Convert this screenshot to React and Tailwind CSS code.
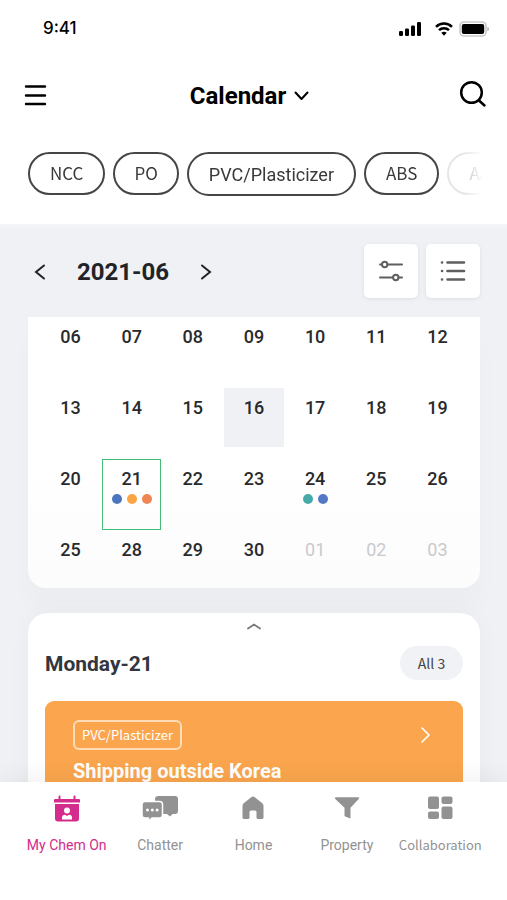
import React, { useState } from "react";

const categories = [
  { name: "NCC", style: "h-[43px] px-5 pb-0.5 font-['Noto_Sans_CJK_KR',sans-serif] text-[17px]" },
  { name: "PO", style: "h-[43px] px-[19px] pb-0.5 font-['Noto_Sans_CJK_KR',sans-serif] text-[17px]" },
  { name: "PVC/Plasticizer", style: "h-[44px] px-5 text-[18px]" },
  { name: "ABS", style: "h-[43px] px-5 pb-0.5 font-['Noto_Sans_CJK_KR',sans-serif] text-[17px]" },
];

const weeks = [
  ["06", "07", "08", "09", "10", "11", "12"],
  ["13", "14", "15", "16", "17", "18", "19"],
  ["20", "21", "22", "23", "24", "25", "26"],
  ["25", "28", "29", "30", "01", "02", "03"],
];

const events = {
  "2-1": ["bg-[#4a76bd]", "bg-[#fba443]", "bg-[#f08455]"],
  "2-4": ["bg-[#46aaa9]", "bg-[#5379c4]"],
};

const StatusBar = () => (
  <div className="flex items-center justify-between pl-[43px] pr-[18px] pt-[18px]">
    <span className="font-['Inter',sans-serif] text-[17px] leading-5 font-medium">9:41</span>
    <div className="flex items-center pt-0.5">
      <svg width="22" height="14" viewBox="0 0 22 14" aria-hidden="true">
        <rect x="0" y="9" width="4" height="5" rx="1.3" />
        <rect x="6" y="6.5" width="4" height="7.5" rx="1.3" />
        <rect x="12" y="3.5" width="4" height="10.5" rx="1.3" />
        <rect x="18" y="0" width="4" height="14" rx="1.3" />
      </svg>
      <svg className="ml-3.5" width="18" height="14" viewBox="0 0 18 14" fill="none" stroke="#000" strokeWidth="2.5" aria-hidden="true">
        <path d="M1 4.8C5.4.5 12.600.5 17 4.800" />
        <path d="M4 8.200C6.800 5.500 11.200 5.500 14 8.200" />
        <path d="M6.300 10.800C7.900 9.500 10.100 9.500 11.700 10.800L9 13.700Z" fill="#000" stroke="none" />
      </svg>
      <svg className="ml-1.5" width="30" height="16" viewBox="0 0 30 16" aria-hidden="true">
        <rect x="1" y="1" width="26" height="14" rx="4" fill="#fff" stroke="#c9c9c9" strokeWidth="1.6" />
        <rect x="2.800" y="3" width="22.400" height="10" rx="2" fill="#000" />
        <path d="M28.500 6v4c1-.4 1.300-1.200 1.300-2s-.3-1.600-1.300-2z" fill="#999" />
      </svg>
    </div>
  </div>
);

const DayCell = ({ day, row, col, active, onSelect }) => {
  const isOther = row === 3 && col > 3;
  const isToday = row === 1 && col === 3;
  const dots = events[`${row}-${col}`];

  return (
    <td className="px-px py-0 align-top">
      <button
        onClick={onSelect}
        className={`flex w-full flex-col items-center pt-2 text-[18px] leading-6 ${
          row === 3 ? "h-[58px]" : isToday ? "h-[59px]" : "h-[71px]"
        } ${isToday ? "bg-[#f0f1f5]" : ""} ${active ? "shadow-[inset_0_0_0_1px_#45bd78]" : ""} ${
          isOther ? "font-normal text-[#c9cacc]" : "font-medium text-[#292a2c]"
        }`}
      >
        {day}
        {dots && (
          <span className="mt-[3px] flex gap-[5px]">
            {dots.map((color, i) => (
              <span key={i} className={`h-2.5 w-2.5 rounded-full ${color}`}></span>
            ))}
          </span>
        )}
      </button>
    </td>
  );
};

const tabs = [
  {
    name: "My Chem On",
    icon: (
      <svg width="28" height="28" viewBox="0 0 28 28" fill="currentColor">
        <path d="M5.500 1.500q0-1 1-1t1 1V4h13V1.500q0-1 1-1t1 1V4H26q1 0 1 1v2.500H1V5q0-1 1-1h3.500z" />
        <path d="M2 9h24v14.500q0 3-3 3H5q-3 0-3-3z" />
        <circle cx="14" cy="15.500" r="3" fill="#fff" />
        <path d="M9 24.500v-1.700q0-3 3-3l2 1.200 2-1.200q3 0 3 3v1.700z" fill="#fff" />
      </svg>
    ),
  },
  {
    name: "Chatter",
    icon: (
      <svg width="36" height="28" viewBox="0 0 36 28" fill="currentColor">
        <path d="M16.500 1H33q3 0 3 3v12q0 3-3 3h-2.500L28 21.500l-3-2.500h-7L13 6V4q0-3 3.500-3z" />
        <path d="M3 6.500h14.500q3 0 3 3v10.500q0 3-3 3H10L6.500 26.500v-3.500H3q-3 0-3-3V9.500q0-3 3-3z" stroke="#fff" strokeWidth="1.5" />
        <circle cx="5.500" cy="15" r="1.500" fill="#fff" />
        <circle cx="10.300" cy="15" r="1.500" fill="#fff" />
        <circle cx="15.100" cy="15" r="1.500" fill="#fff" />
      </svg>
    ),
  },
  {
    name: "Home",
    icon: (
      <svg width="28" height="28" viewBox="0 0 28 28" fill="currentColor">
        <path d="M12.500 2q1.500-1 3 0l7.500 6q1.500 1.200 1.500 3v11.500q0 1.500-1.500 1.500h-4q-1.500 0-1.500-1.500V17q0-1.500-1.500-1.500h-4q-1.500 0-1.500 1.500v5.500Q10.500 24 9 24H5q-1.500 0-1.500-1.500V11q0-1.800 1.500-3z" />
      </svg>
    ),
  },
  {
    name: "Property",
    icon: (
      <svg width="28" height="28" viewBox="0 0 28 28" fill="currentColor">
        <path d="M3 2.200h22q2 0 .7 1.700L17.500 12.700v10q0 .8-.8.500l-4.500-1.800q-.7-.3-.7-1v-7.700L2.300 3.900Q1 2.200 3 2.200z" />
      </svg>
    ),
  },
  {
    name: "Collaboration",
    icon: (
      <svg width="28" height="28" viewBox="0 0 28 28" fill="currentColor">
        <rect x="2" y="1.500" width="11" height="12.500" rx="2" />
        <rect x="15.500" y="1.500" width="11" height="7.500" rx="2" />
        <rect x="2" y="16.500" width="11" height="7.500" rx="2" />
        <rect x="15.500" y="11.500" width="11" height="12.500" rx="2" />
      </svg>
    ),
  },
];

const App = () => {
  const [selected, setSelected] = useState("2-1");
  const [tab, setTab] = useState("My Chem On");

  return (
    <div className="flex h-screen flex-col overflow-hidden bg-[#eff1f5] font-['Roboto',sans-serif] text-black">
      {/* Header */}
      <header className="z-10 bg-white pb-7 shadow-[0_0_6px_3px_#f5f6f8]">
        <StatusBar />

        <div className="mt-[38px] flex items-center justify-between pl-6 pr-5">
          <button aria-label="Menu" className="w-7">
            <svg width="23" height="22" viewBox="0 0 23 22" stroke="#000" strokeWidth="2.4" strokeLinecap="round">
              <path d="M2 1.500h19M2 10.500h19M2 19h19" />
            </svg>
          </button>
          <button className="flex items-center gap-2 text-[24px] leading-10 font-bold">
            Calendar
            <svg width="15" height="10" viewBox="0 0 15 10" fill="none" stroke="#000" strokeWidth="2" strokeLinecap="round" strokeLinejoin="round">
              <path d="M1.500 1.500l6 6.500 6-6.500" />
            </svg>
          </button>
          <button aria-label="Search" className="flex w-10 justify-end pb-1">
            <svg width="28" height="28" viewBox="0 0 28 28" fill="none" stroke="#000" strokeWidth="2.500" strokeLinecap="round">
              <circle cx="12.500" cy="12.500" r="10.300" />
              <path d="M20 20.500l5.500 5" />
            </svg>
          </button>
        </div>

        {/* Categories */}
        <div className="mt-9 ml-7 mr-6 flex items-start gap-2 overflow-hidden [mask-image:linear-gradient(to_right,#000_calc(100%_-_20px),transparent)]">
          {categories.map((item) => (
            <button
              key={item.name}
              className={`shrink-0 rounded-full border-2 border-[#464646] text-[#3a3a3a] ${item.style}`}
            >
              {item.name}
            </button>
          ))}
          <button className="h-[43px] shrink-0 rounded-full border-2 border-[#e6e6e6] px-5 pb-0.5 font-['Noto_Sans_CJK_KR',sans-serif] text-[17px] text-[#b8b8b8]">
            AA
          </button>
        </div>
      </header>

      {/* Month toolbar */}
      <div className="flex items-center justify-between pt-5 pr-[27px] pb-[19px] pl-7">
        <div className="flex items-center pt-0.5">
          <button aria-label="Previous month" className="flex w-6 justify-center">
            <svg width="12" height="16" viewBox="0 0 12 16" fill="none" stroke="#222" strokeWidth="2" strokeLinecap="round">
              <path d="M10 1.500L2 8l8 6.500" />
            </svg>
          </button>
          <h2 className="mx-[25px] text-[24px] leading-8 font-bold text-[#222326]">2021-06</h2>
          <button aria-label="Next month" className="flex w-6 justify-center">
            <svg width="12" height="16" viewBox="0 0 12 16" fill="none" stroke="#222" strokeWidth="2" strokeLinecap="round">
              <path d="M2 1.500L10 8l-8 6.500" />
            </svg>
          </button>
        </div>
        <div className="flex gap-2">
          <button aria-label="Filters" className="flex h-[54px] w-[54px] items-center justify-center rounded-[5px] bg-white shadow-[0_1px_4px_rgba(0,0,0,0.08)]">
            <svg width="26" height="24" viewBox="0 0 26 24" fill="none" stroke="#5f5f5f" strokeWidth="2" strokeLinecap="round">
              <path d="M2 5.500h2M9.500 5.500H24M2 18.500h13M20.500 18.500H24" />
              <circle cx="6.700" cy="5.500" r="2.700" />
              <circle cx="17.800" cy="18.500" r="2.700" />
            </svg>
          </button>
          <button aria-label="List view" className="flex h-[54px] w-[54px] items-center justify-center rounded-[5px] bg-white shadow-[0_1px_4px_rgba(0,0,0,0.08)]">
            <svg width="26" height="24" viewBox="0 0 26 24" fill="none" stroke="#5f5f5f" strokeWidth="2.600" strokeLinecap="round">
              <path d="M7.500 3.500H24M7.500 12H24M7.500 20.500H24M2 3.500h.1M2 12h.1M2 20.500h.1" />
            </svg>
          </button>
        </div>
      </div>

      <main className="flex min-h-0 flex-1 flex-col overflow-hidden pr-[27px] pl-7">
        {/* Calendar */}
        <section className="shrink-0 rounded-b-[18px] bg-gradient-to-b from-white from-50% to-[#fcfcfd] px-3 shadow-[0_24px_24px_rgba(0,0,0,0.02)]">
          <table className="w-full table-fixed border-collapse">
            <tbody>
              {weeks.map((week, row) => (
                <tr key={row}>
                  {week.map((day, col) => (
                    <DayCell
                      key={col}
                      day={day}
                      row={row}
                      col={col}
                      active={selected === `${row}-${col}`}
                      onSelect={() => setSelected(`${row}-${col}`)}
                    />
                  ))}
                </tr>
              ))}
            </tbody>
          </table>
        </section>

        {/* Selected day */}
        <section className="mt-[25px] flex-1 shrink-0 rounded-t-[20px] bg-white px-[17px] pt-2 shadow-[0_0_24px_rgba(0,0,0,0.03)]">
          <button aria-label="Expand" className="mx-auto flex h-2.5 w-10 items-center justify-center">
            <svg width="14" height="7" viewBox="0 0 14 7" fill="none" stroke="#777" strokeWidth="1.800" strokeLinecap="round">
              <path d="M1 5.500l6-4 6 4" />
            </svg>
          </button>
          <div className="mt-[15px] flex items-center justify-between">
            <h3 className="pt-0.5 text-[21px] leading-8 font-bold text-[#32363e]">Monday-21</h3>
            <button className="h-[34px] w-[63px] rounded-full bg-[#f1f2f5] font-['Noto_Sans_CJK_KR',sans-serif] text-[14px] text-[#444]">
              All 3
            </button>
          </div>
          <article className="mt-[21px] rounded-[9px] bg-[#fba64e] px-7 pt-[19px] pb-10 text-white">
            <div className="flex items-center justify-between">
              <span className="flex h-[30px] items-center rounded-md border-2 border-[#fddcb6] px-[7px] font-['Noto_Sans_CJK_KR',sans-serif] text-[13px] leading-5 font-normal">
                PVC/Plasticizer
              </span>
              <a href="#" aria-label="Open event" className="mr-1">
                <svg width="11" height="16" viewBox="0 0 11 16" fill="none" stroke="#fff" strokeWidth="1.600" strokeLinecap="round">
                  <path d="M2 1l7 7-7 7" />
                </svg>
              </a>
            </div>
            <h4 className="mt-[7px] text-[20px] leading-7 font-bold">Shipping outside Korea</h4>
          </article>
        </section>
      </main>

      {/* Bottom tabs */}
      <nav className="z-10 grid h-[118px] shrink-0 grid-cols-5 content-start bg-white px-5 pt-[13px] shadow-[0_-4px_24px_rgba(0,0,0,0.06)]">
        {tabs.map((item) => (
          <button
            key={item.name}
            onClick={() => setTab(item.name)}
            className={`flex flex-col items-center gap-2.5 text-[14px] leading-6 whitespace-nowrap ${
              tab === item.name ? "text-[#d32c8c]" : "text-[#929292]"
            }`}
          >
            {item.icon}
            <span className={item.name === "Collaboration" ? "font-['Noto_Sans_CJK_KR',sans-serif] text-[13px]" : ""}>
              {item.name}
            </span>
          </button>
        ))}
      </nav>
    </div>
  );
};

export default App;
